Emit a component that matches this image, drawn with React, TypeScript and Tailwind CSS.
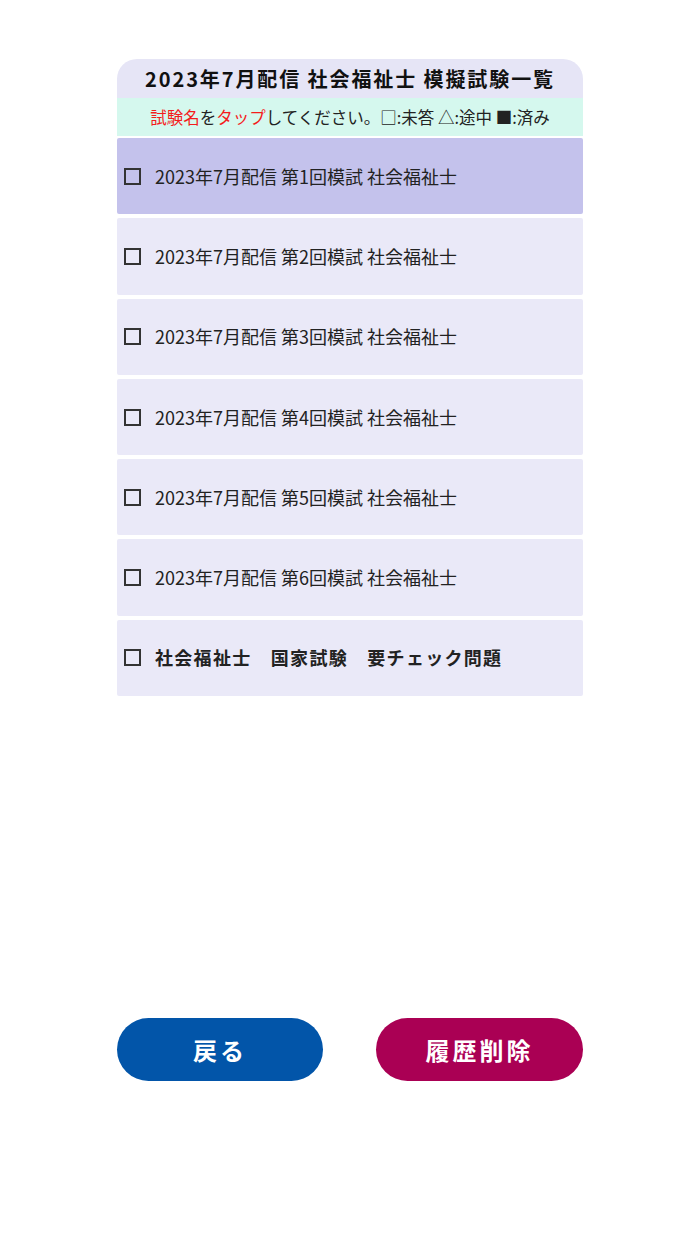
import React from "react";

const font = { fontFamily: '"Noto Sans CJK JP", "Noto Sans", sans-serif' };

const exams = [1, 2, 3, 4, 5, 6].map((n) => `2023年7月配信 第${n}回模試 社会福祉士`);

function Box() {
  return <span className="inline-block w-[17px] h-[17px] border-2 border-[#333] ml-[7px] mr-[14px]" />;
}

export default function App() {
  return (
    <div className="w-[700px] h-[1244px] bg-white" style={font}>
      <div className="w-[466px] mx-auto pt-[59px]">
        <div className="h-[39px] bg-[#e6e5f6] rounded-t-[20px] flex items-center justify-center text-[20px] font-bold tracking-[1.9px] text-[#111]">
          2023年7月配信 社会福祉士 模擬試験一覧
        </div>
        <div className="h-[38px] bg-[#d5f8ee] flex items-center justify-center text-[16.5px] text-[#222]">
          <span className="text-[#f41c1c]">試験名</span>を<span className="text-[#f41c1c]">タップ</span>してください。□:未答 △:途中 ■:済み
        </div>
        <div className="flex flex-col gap-[4px] mt-[2px]">
          {exams.map((t, i) => (
            <div
              key={t}
              className={`h-[76.3px] rounded-[2px] flex items-center text-[18px] text-[#222] ${
                i === 0 ? "bg-[#c4c2ec]" : "bg-[#eae9f8]"
              }`}
            >
              <Box />
              <span>{t}</span>
            </div>
          ))}
          <div className="h-[76.3px] rounded-[2px] flex items-center text-[18px] text-[#222] bg-[#eae9f8]">
            <Box />
            <span className="font-bold tracking-[1.3px]">社会福祉士　国家試験　要チェック問題</span>
          </div>
        </div>
        <div className="flex justify-between mt-[322px]">
          <button className="w-[206px] h-[63px] rounded-full bg-[#0255a9] text-white text-[24px] font-bold tracking-[3px]">
            戻る
          </button>
          <button className="w-[207px] h-[63px] rounded-full bg-[#aa0054] text-white text-[24px] font-bold tracking-[3px]">
            履歴削除
          </button>
        </div>
      </div>
    </div>
  );
}
